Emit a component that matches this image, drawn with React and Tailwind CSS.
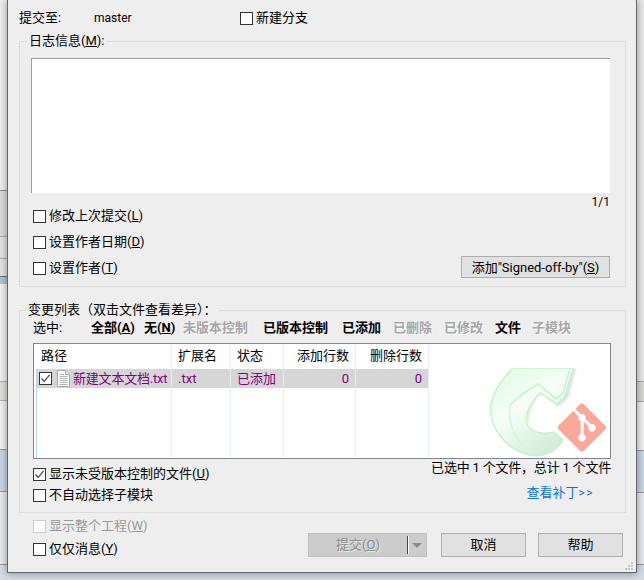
const Check = ({ checked, disabled, className = "" }) => (
  <span className={`flex h-[13px] w-[13px] shrink-0 items-center justify-center border bg-white ${disabled ? "border-[#cccccc]" : "border-[#333333]"} ${className}`}>
    {checked && (
      <svg width="11" height="11" viewBox="0 0 11 11" fill="none">
        <path d="M1.5 5.5 L4.2 8.3 L9.6 1.8" stroke="#444444" strokeWidth="1.2" />
      </svg>
    )}
  </span>
);

const CheckRow = ({ checked, disabled, children, className = "" }) => (
  <div className={`flex items-center gap-[3px] ${disabled ? "text-[#9a9a9a]" : ""} ${className}`}>
    <Check checked={checked} disabled={disabled} />
    <span>{children}</span>
  </div>
);

const Filter = ({ w, off, children }) => (
  <span className={`shrink-0 font-bold ${w} ${off ? "text-[#a6a6a6] [text-shadow:1px_1px_0_#ffffff]" : "text-black"}`}>{children}</span>
);

const Btn = ({ w, children }) => (
  <div className={`flex h-[24px] items-center justify-center border border-[#adadad] bg-[#e1e1e1] ${w}`}>{children}</div>
);

const Col = ({ w, head, right, children }) => (
  <div className={`flex shrink-0 flex-col border-r border-[#e5eef8] ${w}`}>
    <div className={`flex h-[25px] items-center pb-[2px] ${right ? "justify-end pr-[6px]" : "pl-[6px]"}`}>{head}</div>
    <div className={`flex h-[19px] items-center bg-[#d6d6d6] text-[#800080] ${right ? "justify-end pr-[6px]" : "pl-[6px]"}`}>{children}</div>
  </div>
);

const Logo = () => (
  <svg className="absolute bottom-0 right-0" width="182" height="90" viewBox="429 369 182 90">
    <defs>
      <linearGradient id="cg" x1="0" y1="0" x2="0.6" y2="1">
        <stop offset="0" stopColor="#dcfadf" />
        <stop offset="0.5" stopColor="#f6fef7" />
        <stop offset="0.72" stopColor="#e6f7e8" />
        <stop offset="1" stopColor="#d3ecd7" />
      </linearGradient>
      <filter id="bl"><feGaussianBlur stdDeviation="1.6" /></filter>
    </defs>
    <path d="M577 369 L569 399 L559 408 L554 403 L566 392 L573 369 Z" fill="#cfcfcf" opacity="0.7" filter="url(#bl)" />
    <path d="M540 397 C532 406 529 416 530 424 L527 424 C526 414 531 404 538 394 Z" fill="#d5d5d5" opacity="0.7" filter="url(#bl)" />
    <path d="M514 369 C498 385 490 400 492 415 C494 435 512 452 530 456 C545 459 558 452 564 441 L555 433 C545 436 532 434 528 425 C525 415 532 403 541 394 L558 405 L566 397 L574 369 Z" fill="url(#cg)" stroke="#c6f2cd" strokeWidth="1.5" />
    <path d="M511 406 C521 396 530 390 539 385 L557 400 L564 394 L571 369" fill="none" stroke="#c6f2cd" strokeWidth="1.5" />
    <path d="M511 406 C509 425 516 442 532 455" fill="none" stroke="#d4f5d9" strokeWidth="1.5" />
    <svg x="559" y="404" width="48" height="49" viewBox="0 0 92 92">
      <path fill="#f9a99a" d="M90.156 41.965L50.036 1.848a5.918 5.918 0 0 0-8.372 0l-8.328 8.332 10.566 10.566a7.03 7.03 0 0 1 7.23 1.684 7.034 7.034 0 0 1 1.669 7.277l10.187 10.184a7.028 7.028 0 0 1 7.278 1.672 7.04 7.04 0 0 1 0 9.957 7.05 7.05 0 0 1-9.965 0 7.044 7.044 0 0 1-1.528-7.66l-9.5-9.497V59.36a7.04 7.04 0 0 1 1.86 1.328 7.04 7.04 0 0 1 0 9.957 7.04 7.04 0 0 1-9.957 0 7.04 7.04 0 0 1 0-9.957 7.06 7.06 0 0 1 2.304-1.539V33.926a7.049 7.049 0 0 1-3.82-9.234L29.242 14.272 1.73 41.777a5.925 5.925 0 0 0 0 8.371L41.852 90.27a5.925 5.925 0 0 0 8.37 0l39.934-39.934a5.925 5.925 0 0 0 0-8.371" />
    </svg>
  </svg>
);

const FileIcon = () => (
  <svg width="13" height="17" viewBox="0 0 13 17" fill="none" className="shrink-0">
    <path d="M0.5 0.5 H8.5 L12.5 4.5 V16.5 H0.5 Z" fill="#fbfbfb" stroke="#a8a8a8" />
    <path d="M8.5 0.5 V4.5 H12.5" stroke="#a8a8a8" fill="#e8e8e8" />
    <path d="M2.5 4.5 H7 M2.5 6.5 H10.5 M2.5 8.5 H10.5 M2.5 10.5 H10.5 M2.5 12.5 H10.5 M2.5 14.5 H10.5" stroke="#b4b4b4" />
  </svg>
);

export default function App() {
  return (
    <div className="flex h-[580px] w-[644px] flex-col overflow-hidden bg-[#d3dbe4] font-['Roboto','Noto_Sans_CJK_SC',sans-serif] text-[13px] leading-[18px] text-black">
      <div className="flex h-[573px] shrink-0">
        {/* window behind, left edge */}
        <div className="flex w-[7px] shrink-0 flex-col overflow-hidden">
          <div className="h-[191px] shrink-0 border-b border-[#8f8f8f] bg-[#eeeeee]" />
          <div className="h-[46px] shrink-0 border-b border-[#a8a8a8] bg-[#dcdcdc]" />
          <div className="h-[22px] shrink-0 border-b border-[#a8a8a8] bg-[#e3e3e3]" />
          <div className="h-[18px] shrink-0 border-b border-[#777777] bg-[#e3e3e3]" />
          <div className="h-[7px] shrink-0 bg-[#b7c2ce]" />
          <div className="h-[98px] shrink-0 border-b border-[#b5b5b5] bg-[#f2f2f2]" />
          <div className="h-[19px] shrink-0 border-b border-[#b5b5b5] bg-[#e0dfdc]" />
          <div className="h-[49px] shrink-0 border-b border-[#9a9a9a] bg-[#f0f0f0]" />
          <div className="h-[42px] shrink-0 border-b border-[#9a9a9a] bg-[#cad6e4]" />
          <div className="h-[73px] shrink-0 border-b border-[#9a9a9a] bg-[#e6e9ed]" />
          <div className="flex-1 bg-[#d3dbe4]" />
        </div>

        {/* dialog */}
        <div className="relative z-10 flex w-[630px] shrink-0 flex-col border-x border-b border-[#666666] bg-[#eeeeee] pl-[11px] pr-[10px] shadow-[0_0_8px_rgba(0,0,0,0.4)]">
          <div className="flex h-[32px] shrink-0 items-end pb-[5px]">
            <span className="w-[75px] shrink-0">提交至:</span>
            <span className="w-[146px] shrink-0 text-[12px]">master</span>
            <CheckRow>新建分支</CheckRow>
          </div>

          <fieldset className="h-[255px] shrink-0 border border-[#dcdcdc] pl-[11px] pr-[15px]">
            <legend className="ml-[-4px] px-[2px] leading-[18px]">日志信息(<u>M</u>):</legend>
            <div className="mt-[8px] h-[135px] border-l border-t border-[#a0a0a0] bg-white" />
            <div className="flex h-[92px] justify-between">
              <div className="flex flex-col pl-[2px] pt-[10px]">
                <CheckRow className="h-[26px]">修改上次提交(<u>L</u>)</CheckRow>
                <CheckRow className="h-[26px]">设置作者日期(<u>D</u>)</CheckRow>
                <CheckRow className="h-[26px]">设置作者(<u>T</u>)</CheckRow>
              </div>
              <div className="flex flex-col items-end">
                <span className="h-[18px] text-[12px]">1/1</span>
                <div className="mt-[45px] flex h-[22px] w-[149px] items-center justify-center border border-[#adadad] bg-[#e1e1e1] pt-px">添加"Signed-off-by"(<u>S</u>)</div>
              </div>
            </div>
          </fieldset>

          <fieldset className="mt-[14px] h-[212px] shrink-0 border border-[#dcdcdc] pl-[13px] pr-[14px]">
            <legend className="ml-[-7px] px-[2px] leading-[18px]">变更列表（双击文件查看差异）：</legend>
            <div className="flex h-[18px] whitespace-nowrap">
              <span className="w-[58px] shrink-0">选中:</span>
              <Filter w="w-[53px]">全部(<u>A</u>)</Filter>
              <Filter w="w-[39px]">无(<u>N</u>)</Filter>
              <Filter w="w-[80px]" off>未版本控制</Filter>
              <Filter w="w-[79px]">已版本控制</Filter>
              <Filter w="w-[51px]">已添加</Filter>
              <Filter w="w-[51px]" off>已删除</Filter>
              <Filter w="w-[51px]" off>已修改</Filter>
              <Filter w="w-[37px]">文件</Filter>
              <Filter w="w-[40px]" off>子模块</Filter>
            </div>

            <div className="relative mt-[6px] flex h-[116px] overflow-hidden border border-[#82878f] bg-white whitespace-nowrap">
              <Logo />
              <div className="relative flex w-[138px] shrink-0 flex-col border-r border-[#e5eef8]">
                <div className="flex h-[25px] items-center pb-[2px] pl-[7px]">路径</div>
                <div className="ml-[2px] flex flex-1 flex-col border-l border-[#b8d4f0]">
                  <div className="flex h-[19px] items-center overflow-hidden bg-[#d6d6d6] pl-[2px] text-[#800080]">
                    <Check checked />
                    <span className="ml-[5px]"><FileIcon /></span>
                    <span className="ml-[3px] tracking-[-0.2px]">新建文本文档.txt</span>
                  </div>
                </div>
              </div>
              <Col w="w-[59px]" head="扩展名">.txt</Col>
              <Col w="w-[53px]" head="状态">已添加</Col>
              <Col w="w-[72px]" head="添加行数" right>0</Col>
              <Col w="w-[73px]" head="删除行数" right>0</Col>
            </div>

            <div className="flex h-[52px] justify-between">
              <div className="flex flex-col pt-[5px]">
                <CheckRow checked className="h-[20px]">显示未受版本控制的文件(<u>U</u>)</CheckRow>
                <CheckRow className="mt-px h-[20px]">不自动选择子模块</CheckRow>
              </div>
              <div className="flex flex-col items-end">
                <span className="h-[18px] tracking-[-0.2px]">已选中 1 个文件，总计 1 个文件</span>
                <span className="mr-[17px] mt-[7px] h-[18px] text-[#0a74d9]">查看补丁<span className="tracking-[1.5px] text-[12px]">&gt;&gt;</span></span>
              </div>
            </div>
          </fieldset>

          <div className="flex flex-1 justify-between pl-[14px] pr-[3px]">
            <div className="flex flex-col pt-[4px]">
              <CheckRow disabled className="h-[18px]">显示整个工程(<u>W</u>)</CheckRow>
              <CheckRow className="mt-[5px] h-[18px]">仅仅消息(<u>Y</u>)</CheckRow>
            </div>
            <div className="flex items-start gap-[12px] pt-[20px]">
              <div className="mr-[2px] flex h-[24px] w-[119px] items-center border border-[#bfbfbf] bg-[#cccccc] text-[#8c8c8c]">
                <span className="w-[98px] text-center [text-shadow:1px_1px_0_#e8e8e8]">提交(<u>O</u>)</span>
                <span className="h-[18px] w-[2px] border-l border-r border-l-[#444444] border-r-white" />
                <svg width="10" height="5" viewBox="0 0 10 5" className="ml-[3px]"><path d="M0 0 H10 L5 5 Z" fill="#8c8c8c" /></svg>
              </div>
              <Btn w="w-[85px]">取消</Btn>
              <Btn w="w-[85px]">帮助</Btn>
            </div>
          </div>

          {/* resize grip */}
          <svg className="absolute bottom-[2px] right-[2px]" width="9" height="8" viewBox="0 0 9 8" fill="#c4c4c4">
            <rect x="6" y="0" width="2" height="2" /><rect x="3" y="3" width="2" height="2" /><rect x="6" y="3" width="2" height="2" />
            <rect x="0" y="6" width="2" height="2" /><rect x="3" y="6" width="2" height="2" /><rect x="6" y="6" width="2" height="2" />
          </svg>
        </div>

        {/* window behind, right edge */}
        <div className="flex flex-1 flex-col overflow-hidden">
          <div className="h-[382px] shrink-0 border-b border-[#a8a8a8] bg-[#e9e9e9]" />
          <div className="h-[20px] shrink-0 border-b border-[#a8a8a8] bg-[#d8d8d6]" />
          <div className="h-[49px] shrink-0 border-b border-[#9a9a9a] bg-[#f0f0f0]" />
          <div className="h-[42px] shrink-0 border-b border-[#9a9a9a] bg-[#cad6e4]" />
          <div className="h-[72px] shrink-0 border-b border-[#9a9a9a] bg-[#e6e9ed]" />
          <div className="flex-1 bg-[#d3dbe4]" />
        </div>
      </div>
    </div>
  );
}
